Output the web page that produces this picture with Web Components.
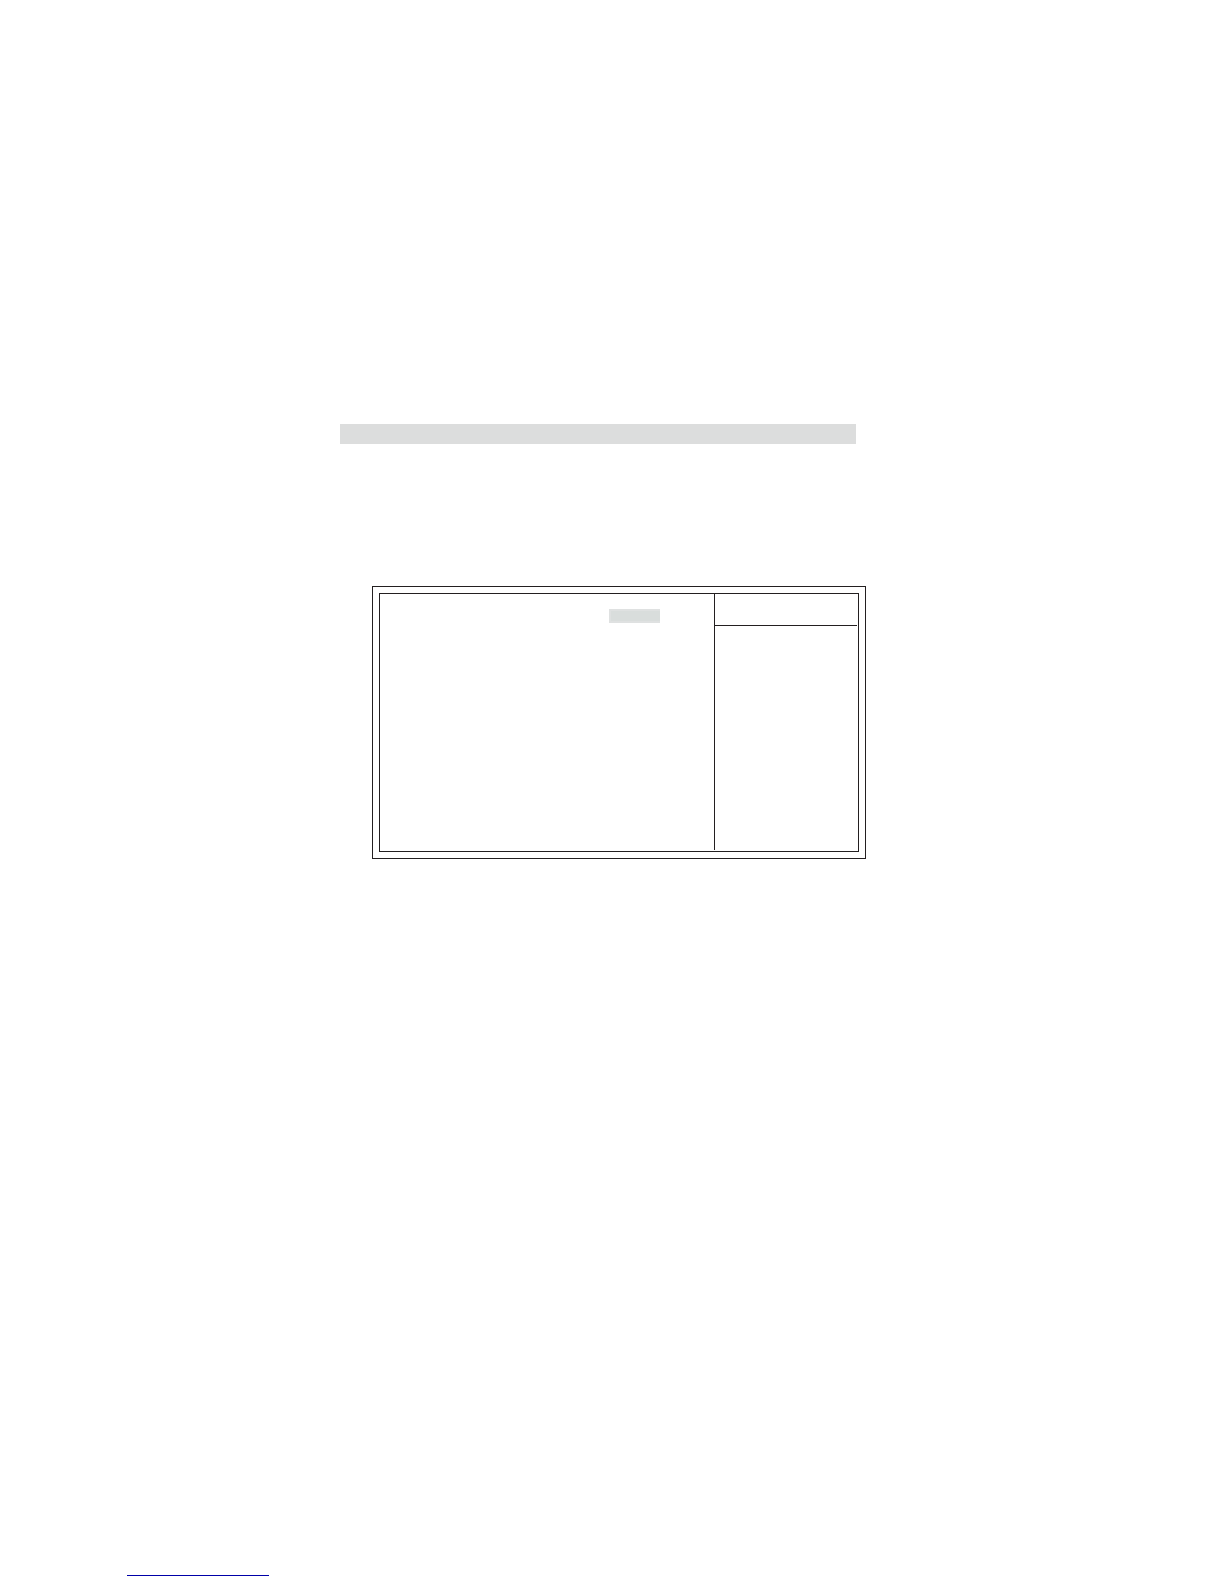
<!DOCTYPE html>
<html lang="en">
<head>
<meta charset="utf-8">
<meta name="viewport" content="width=device-width, initial-scale=1">
<title>Setup</title>
<style>
    body {
        margin: 0;
        background: #fff;
        color: #231f20;
        font-family: "Liberation Sans", sans-serif;
    }
</style>
</head>
<body>
<manual-page>
    <title-bar></title-bar>
    <setup-frame>
        <setup-value></setup-value>
    </setup-frame>
    <footer-link slot="footer" href="#top" label="Back to top"></footer-link>
</manual-page>

<script>
class ManualPage extends HTMLElement {
    constructor() {
        super();
        this.attachShadow({ mode: "open" }).innerHTML = `
            <style>
                :host {
                    display: flex;
                    flex-direction: column;
                    justify-content: space-between;
                    box-sizing: border-box;
                    min-height: 100vh;
                    padding: 424px 0 8px;
                }
                main {
                    display: flex;
                    flex-direction: column;
                    gap: 142px;
                }
            </style>
            <main><slot></slot></main>
            <footer><slot name="footer"></slot></footer>
        `;
    }
}

class TitleBar extends HTMLElement {
    constructor() {
        super();
        this.attachShadow({ mode: "open" }).innerHTML = `
            <style>
                :host {
                    display: block;
                    min-height: 20px;
                    margin: 0 368px 0 340px;
                    background: #dcdddd;
                }
            </style>
            <slot></slot>
        `;
    }
}

// Double-ruled frame: the settings on the left, the item help on the right.
class SetupFrame extends HTMLElement {
    constructor() {
        super();
        this.attachShadow({ mode: "open" }).innerHTML = `
            <style>
                :host {
                    display: block;
                    margin: 0 358px 0 372px;
                    padding: 6px;
                    border: 1px solid #231f20;
                }
                .inner {
                    display: grid;
                    grid-template-columns: 1fr 143px;
                    box-sizing: border-box;
                    min-height: 259px;
                    padding: 0 1px 1px 0;
                    border: 1px solid #231f20;
                }
                .settings {
                    display: flex;
                    justify-content: flex-end;
                    align-items: flex-start;
                    padding: 15px 54px 0 0;
                }
                .help {
                    border-left: 1px solid #231f20;
                }
                .heading {
                    min-height: 31px;
                    border-bottom: 1px solid #231f20;
                }
            </style>
            <div class="inner">
                <section class="settings"><slot></slot></section>
                <aside class="help">
                    <div class="heading"><slot name="heading"></slot></div>
                    <slot name="help"></slot>
                </aside>
            </div>
        `;
    }
}

class SetupValue extends HTMLElement {
    constructor() {
        super();
        this.attachShadow({ mode: "open" }).innerHTML = `
            <style>
                :host {
                    display: block;
                    box-sizing: border-box;
                    min-width: 51px;
                    min-height: 14px;
                    background: #d9dddc;
                    border: 2px solid #dfe1e1;
                    border-right: 0;
                }
            </style>
            <slot></slot>
        `;
    }
}

class FooterLink extends HTMLElement {
    connectedCallback() {
        if (this.shadowRoot) return;
        this.attachShadow({ mode: "open" }).innerHTML = `
            <style>
                :host {
                    display: flex;
                    margin-left: 127px;
                }
                a {
                    min-width: 142px;
                    border-bottom: 1px solid #0000a8;
                    color: #0000a8;
                    text-decoration: none;
                }
            </style>
            <a href="${this.getAttribute("href")}" aria-label="${this.getAttribute("label")}"><slot></slot></a>
        `;
    }
}

customElements.define("manual-page", ManualPage);
customElements.define("title-bar", TitleBar);
customElements.define("setup-frame", SetupFrame);
customElements.define("setup-value", SetupValue);
customElements.define("footer-link", FooterLink);
</script>
</body>
</html>
